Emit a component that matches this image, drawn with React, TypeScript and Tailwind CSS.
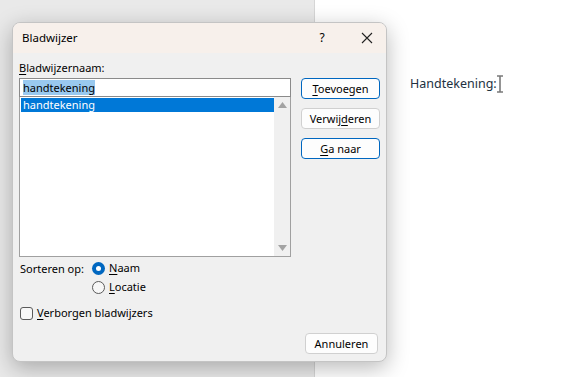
import React from "react";

const U = ({ children }: { children: React.ReactNode }) => (
  <span className="underline underline-offset-[2px] decoration-[1px]">{children}</span>
);

export default function App() {
  return (
    <div
      className="relative w-[575px] h-[377px] overflow-hidden flex text-[11px] text-black"
      style={{ fontFamily: '"Noto Sans", "Segoe UI", sans-serif' }}
    >
      <div className="w-[315px] h-full bg-[#e9e9e9] border-r border-[#d6d6d6]" />
      <div className="flex-1 h-full bg-white pl-[95px] pt-[75px]">
        <div className="flex items-center text-[12.5px] text-[#22313f] leading-[18px]">
          <span>Handtekening:</span>
          <svg width="8" height="18" viewBox="0 0 8 18" className="-ml-[1px]">
            <path d="M1 1h6M4 1v16M1 17h6" stroke="#7a7a7a" strokeWidth="1.6" fill="none" />
          </svg>
        </div>
      </div>

      {/* dialog */}
      <div className="absolute left-[12px] top-[22px] w-[375px] h-[340px] rounded-[8px] border border-[#c4c4c4] bg-[#f0f0f0] shadow-[0_6px_22px_rgba(0,0,0,0.28)] flex flex-col overflow-hidden">
        <div className="h-[30px] bg-[#f7f0eb] flex items-center pl-[9px] shrink-0">
          <span className="flex-1 text-[11.5px]">Bladwijzer</span>
          <span className="w-[12px] text-center mr-[33px] text-[12px]">?</span>
          <svg width="12" height="12" viewBox="0 0 12 12" className="mr-[13px]">
            <path d="M1 1L11 11M11 1L1 11" stroke="#222" strokeWidth="1.1" />
          </svg>
        </div>
        <div className="flex flex-col px-[6px] pt-[7px]">
          <div className="flex">
            <div className="w-[272px] flex flex-col">
              <div className="h-[16px] leading-[16px] mb-[2px]">
                <U>B</U>ladwijzernaam:
              </div>
              <div className="h-[19px] bg-white border border-[#8a8a8a] flex items-center px-[3px]">
                <span className="bg-[#99c9ef] leading-[15px]">handtekening</span>
              </div>
              <div className="h-[160px] bg-white border border-[#a0a0a0] border-t-0 flex">
                <div className="flex-1 pt-[1px] pl-[1px]">
                  <div className="h-[14px] bg-[#0078d7] text-white leading-[14px] pl-[2px]">handtekening</div>
                </div>
                <div className="w-[16px] bg-[#f0f0f0] flex flex-col items-center justify-between py-[5px]">
                  <svg width="9" height="6" viewBox="0 0 9 6">
                    <path d="M4.5 0L9 6H0z" fill="#a3a3a3" />
                  </svg>
                  <svg width="9" height="6" viewBox="0 0 9 6">
                    <path d="M0 0h9L4.5 6z" fill="#a3a3a3" />
                  </svg>
                </div>
              </div>
            </div>
            <div className="ml-[10px] pt-[18px] flex flex-col gap-[9px]">
              <button className="w-[79px] h-[21px] rounded-[4px] bg-[#fdfdfd] border border-[#0067c0] leading-[19px] text-center">
                <U>T</U>oevoegen
              </button>
              <button className="w-[79px] h-[21px] rounded-[4px] bg-[#fdfdfd] border border-[#d0d0d0] leading-[19px] text-center">
                Verwij<U>d</U>eren
              </button>
              <button className="w-[79px] h-[21px] rounded-[4px] bg-[#fdfdfd] border border-[#0067c0] leading-[19px] text-center">
                <U>G</U>a naar
              </button>
            </div>
          </div>

          <div className="flex mt-[2px]">
            <div className="w-[73px] h-[19px] leading-[19px] pl-[1px]">Sorteren op:</div>
            <div className="flex flex-col">
              <div className="h-[19px] flex items-center gap-[4px]">
                <span className="w-[13px] h-[13px] rounded-full bg-[#0067c0] flex items-center justify-center">
                  <span className="w-[5px] h-[5px] rounded-full bg-white" />
                </span>
                <span><U>N</U>aam</span>
              </div>
              <div className="h-[19px] flex items-center gap-[4px]">
                <span className="w-[13px] h-[13px] rounded-full border border-[#5a5a5a] bg-[#f7f7f7]" />
                <span><U>L</U>ocatie</span>
              </div>
            </div>
          </div>

          <div className="flex items-center gap-[4px] mt-[7px] pl-[1px] h-[19px]">
            <span className="w-[13px] h-[13px] rounded-[3px] border border-[#5a5a5a] bg-[#f7f7f7]" />
            <span><U>V</U>erborgen bladwijzers</span>
          </div>

          <div className="flex justify-end pr-[2px] mt-[10px]">
            <button className="w-[73px] h-[21px] rounded-[4px] bg-[#fdfdfd] border border-[#d0d0d0] leading-[19px] text-center">
              Annuleren
            </button>
          </div>
        </div>
      </div>
    </div>
  );
}
